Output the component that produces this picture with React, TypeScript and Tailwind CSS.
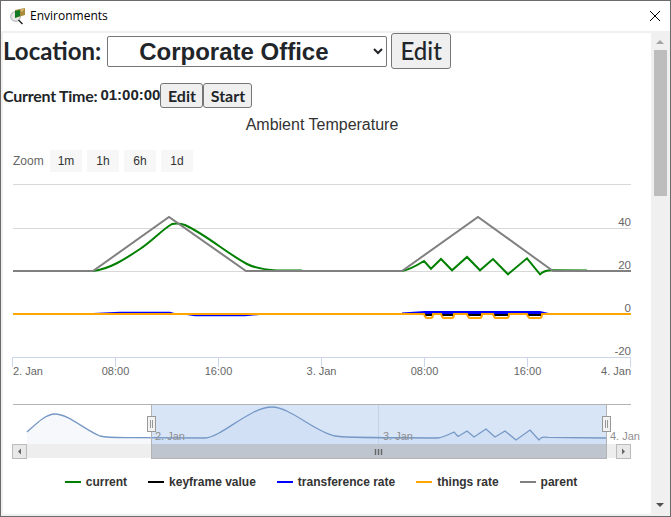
const gridY = [184.5, 228.5, 271.5];

const parent = "13,271 93,271 169,217 246,271 402,271 478,217 553,271 631,271";
const currentA =
  "M93 271 C110 269 125 259 140 249 C152 241 163 229 172 224 C176 223 180 223 185 225 C205 234 228 254 247 264 C255 268 262 269.6 277 270.4 L302 270.6";
const currentB =
  "M402 271 C408 270 416 266 424 261 L431 268.7 L441 259 L452 270.3 L467 257 L480 270.3 L493 259 L508 274.3 L527 258.3 L540 274.3 C543 271 546 270 553 270.2 L587 270.6";
const things =
  "M13 314 L424 314 Q425 318 427 318 L431 318 Q433 318 433 314 L441 314 Q442 318 444 318 L452 318 Q454 318 454 314 L467 314 Q468 318 470 318 L480 318 Q482 318 482 314 L493 314 Q494 318 496 318 L507 318 Q509 318 509 314 L527 314 Q528 318 530 318 L540 318 Q542 318 542 314 L631 314";
const nav =
  "M27 432 C35 425 45 414 55 414 C68 414 85 430 100 436 C108 438 120 437.5 135 437.7 L205 438 C222 437 250 407 272 407 C290 407 315 432 335 436 C345 438 380 437.5 438 438 C444 437 450 434 454 432 L458 436.5 L467 431 L474 437 L486 429 L495 437 L505 431 L516 440 L530 430 L539 440 C541 437 543 437 548 437.3 L606 438";

const xTicks = [12.5, 115.5, 218.5, 321.5, 424.5, 527.5, 630.5];
const xLabels: [string, number, "start" | "middle" | "end"][] = [
  ["2. Jan", 13, "start"],
  ["08:00", 115.5, "middle"],
  ["16:00", 218.5, "middle"],
  ["3. Jan", 321.5, "middle"],
  ["08:00", 424.5, "middle"],
  ["16:00", 527.5, "middle"],
  ["4. Jan", 631, "end"],
];
const yLabels: [string, number][] = [
  ["40", 226],
  ["20", 269],
  ["0", 312],
  ["-20", 355],
];

const legend = [
  { label: "current", color: "bg-[#008000]" },
  { label: "keyframe value", color: "bg-[#000000]" },
  { label: "transference rate", color: "bg-[#0000ff]" },
  { label: "things rate", color: "bg-[#ffa500]" },
  { label: "parent", color: "bg-[#808080]" },
];

function WindowIcon() {
  return (
    <svg width="18" height="18" viewBox="0 0 18 18" aria-hidden="true">
      <circle cx="6.5" cy="9.5" r="4.8" fill="#e8e8e8" stroke="#a8a8a8" />
      <path d="M9.5 13 L13.5 17" stroke="#222" strokeWidth="1.5" />
      <path d="M6 3 L16 1 L16 8 L6 11 Z" fill="#a88a3c" />
      <path d="M6 4 L11 3 L11 9 L6 11 Z" fill="#0f7a22" />
      <path d="M11 3 L16 1.5 L13 5 Z" fill="#d8bd6c" />
    </svg>
  );
}

function Chart() {
  return (
    <svg width="638" height="292" viewBox="3 180 638 292" className="block" fontFamily="'Liberation Sans', sans-serif">
      {gridY.map((y) => (
        <line key={y} x1="13" x2="631" y1={y} y2={y} stroke="#d8d8d8" />
      ))}

      <path d={currentA} fill="none" stroke="#008000" strokeWidth="2" />
      <path d={currentB} fill="none" stroke="#008000" strokeWidth="2" />
      <polyline points={parent} fill="none" stroke="#808080" strokeWidth="2" />

      {/* transference + keyframe slivers sit under the rate line */}
      <path d="M93 313 L120 311.8 L170 311.8 L178 314 L93 314 Z" fill="#0000ff" />
      <path d="M180 314 L270 314 L245 316.2 L195 316.2 Z" fill="#0000ff" />
      <path d="M402 312.5 L425 311 L540 311 L553 314 L402 314 Z" fill="#0000ff" />
      <path d="M425 314 H433 V316 H425 Z M442 314 H454 V316 H442 Z M468 314 H482 V316 H468 Z M493 314 H509 V316 H493 Z M528 314 H542 V316 H528 Z" fill="#000" />
      <path d={things} fill="none" stroke="#ffa500" strokeWidth="2" />

      <g fill="#666" fontSize="11.5" textAnchor="end">
        {yLabels.map(([t, y]) => (
          <text key={t} x="631" y={y}>
            {t}
          </text>
        ))}
      </g>

      <line x1="12.5" x2="630.5" y1="357.5" y2="357.5" stroke="#ccd6eb" />
      {xTicks.map((x) => (
        <line key={x} x1={x} x2={x} y1="357" y2="367" stroke="#ccd6eb" />
      ))}
      <g fill="#666" fontSize="11">
        {xLabels.map(([t, x, anchor], i) => (
          <text key={i} x={x} y="375" textAnchor={anchor}>
            {t}
          </text>
        ))}
      </g>

      {/* navigator */}
      <line x1="13" x2="631" y1="404.5" y2="404.5" stroke="#b3b3b3" />
      <path d={`${nav} L606 444 L27 444 Z`} fill="#6685c2" fillOpacity="0.06" />
      <rect x="151.5" y="405" width="455" height="39" fill="#d7e5f7" />
      <path d={`${nav} L606 444 L27 444 Z`} fill="#6685c2" fillOpacity="0.05" clipPath="url(#navMask)" />
      <clipPath id="navMask">
        <rect x="151.5" y="405" width="455" height="39" />
      </clipPath>
      <line x1="378.5" x2="378.5" y1="405" y2="444" stroke="#c3d2e8" />
      <path d={nav} fill="none" stroke="#7698c6" strokeWidth="1.3" />
      <line x1="151.5" x2="151.5" y1="405" y2="444" stroke="#b3b3b3" />
      <line x1="606.5" x2="606.5" y1="405" y2="444" stroke="#b3b3b3" />
      <g fill="#8f8f8f" fontSize="11">
        <text x="155" y="440">2. Jan</text>
        <text x="383" y="440">3. Jan</text>
        <text x="610" y="440">4. Jan</text>
      </g>

      <rect x="13" y="444" width="618" height="14" fill="#eeeeee" />
      <rect x="151" y="444" width="456" height="14" fill="#bec5cf" />
      <line x1="151" x2="607" y1="458.5" y2="458.5" stroke="#b3b3b3" />
      <line x1="151.5" x2="151.5" y1="444" y2="458" stroke="#b3b3b3" />
      <line x1="606.5" x2="606.5" y1="444" y2="458" stroke="#b3b3b3" />
      <path d="M375.5 449 V455 M378.5 449 V455 M381.5 449 V455" stroke="#666" strokeWidth="1.4" />

      <rect x="12.5" y="444.5" width="14" height="14" fill="#e8e8e8" stroke="#bbb" />
      <path d="M18 451.5 L21 448.5 V454.5 Z" fill="#666" />
      <rect x="616.5" y="444.5" width="14" height="14" fill="#e8e8e8" stroke="#bbb" />
      <path d="M625 451.5 L622 448.5 V454.5 Z" fill="#666" />

      <rect x="147.5" y="416.5" width="8" height="15" fill="#f2f2f2" stroke="#999" />
      <path d="M150.5 420 V428 M152.5 420 V428" stroke="#999" />
      <rect x="602.5" y="416.5" width="8" height="15" fill="#f2f2f2" stroke="#999" />
      <path d="M605.5 420 V428 M607.5 420 V428" stroke="#999" />
    </svg>
  );
}

export default function App() {
  return (
    <div className="flex h-[517px] w-[671px] flex-col overflow-hidden border border-[#6b6b6b] bg-[#f0f0f0] text-[#212529]">
      <div className="flex h-[30px] shrink-0 items-center justify-between bg-white pl-2 pr-[9px]">
        <div className="flex items-center gap-[3px]">
          <WindowIcon />
          <span className="font-['Open_Sans','Noto_Sans',sans-serif] text-xs text-black">Environments</span>
        </div>
        <svg width="12" height="12" viewBox="0 0 12 12" aria-hidden="true">
          <path d="M1 1 L11 11 M11 1 L1 11" stroke="#000" strokeWidth="1" />
        </svg>
      </div>

      <div className="mb-[2px] ml-[2px] mr-[1px] mt-[2px] flex min-h-0 flex-1">
        <div className="w-[648px] shrink-0 bg-white font-['Lato',sans-serif]">
          <div className="flex h-9 items-center">
            <span className="text-2xl font-bold">Location:</span>
            <select className="ml-[6px] h-[31px] w-[280px] rounded-[2px] border border-[#767676] bg-white pl-[27px] font-['Liberation_Sans',sans-serif] text-2xl font-bold">
              <option>Corporate Office</option>
            </select>
            <button className="ml-1 h-9 w-[60px] rounded-[3px] border border-[#767676] bg-[#efefef] text-2xl font-medium">
              Edit
            </button>
          </div>

          <div className="mt-[14px] flex h-[25px] items-center text-base font-bold">
            <span className="tracking-[-0.25px]">Current Time:</span>
            <span className="ml-[3px] w-[60px] font-['Liberation_Sans',sans-serif] text-[15px]">01:00:00</span>
            <button className="h-[25px] w-[43px] rounded-[3px] border border-[#767676] bg-[#efefef]">Edit</button>
            <button className="h-[25px] w-[49px] rounded-[3px] border border-[#767676] bg-[#efefef]">Start</button>
          </div>

          <div className="w-[636px] font-['Liberation_Sans',sans-serif]">
            <div className="mt-2 h-[18px] w-[638px] text-center text-base leading-[18px] text-[#333333]">Ambient Temperature</div>

            <div className="ml-[10px] mt-4 flex h-[22px] items-center text-xs text-[#666666]">
              <span className="w-[37px]">Zoom</span>
              <div className="flex gap-[5px]">
                {["1m", "1h", "6h", "1d"].map((z) => (
                  <span key={z} className="flex h-[22px] w-8 items-center justify-center bg-[#f7f7f7] text-[#333333]">
                    {z}
                  </span>
                ))}
              </div>
            </div>

            <div className="mt-2">
              <Chart />
            </div>

            <div className="flex h-5 items-center justify-center gap-[21px] text-xs font-bold text-[#333333]">
              {legend.map((l) => (
                <div key={l.label} className="flex items-center gap-[5px]">
                  <span className={`h-[2px] w-4 ${l.color}`} />
                  <span>{l.label}</span>
                </div>
              ))}
            </div>
          </div>
        </div>

        <div className="flex w-[18px] shrink-0 flex-col items-center bg-[#f0f0f0] py-[7px]">
          <div className="h-0 w-0 border-x-[4px] border-b-[4px] border-x-transparent border-b-[#a3a3a3]" />
          <div className="mt-[6px] h-[146px] w-[13px] bg-[#bdbdbd]" />
          <div className="mt-auto h-0 w-0 border-x-[4px] border-t-[4px] border-x-transparent border-t-[#505050]" />
        </div>
      </div>
    </div>
  );
}
